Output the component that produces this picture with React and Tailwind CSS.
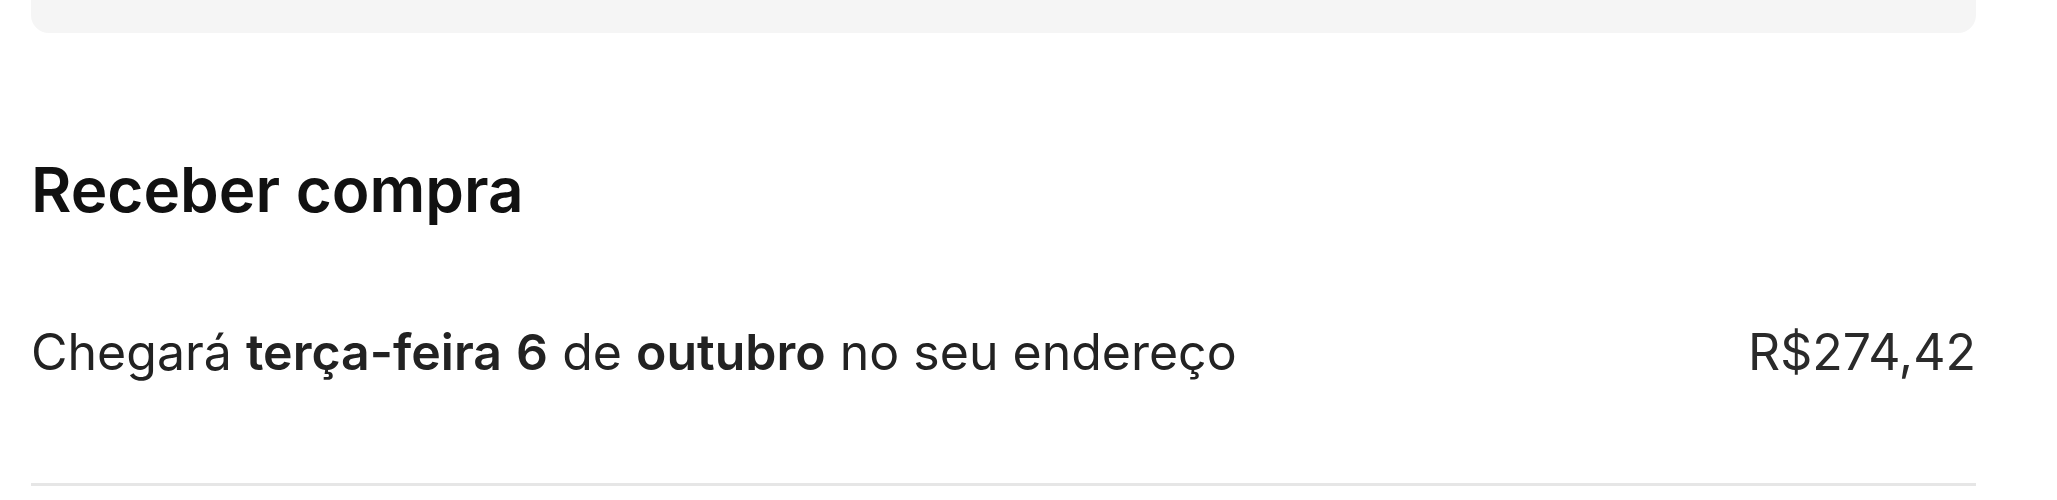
import React from "react";

const deliveryText = [
  { text: "Chegará ", bold: false },
  { text: "terça-feira", bold: true },
  { text: " ", bold: false },
  { text: "6", bold: true },
  { text: " de ", bold: false },
  { text: "outubro", bold: true },
  { text: " no seu endereço", bold: false },
];

export default function App() {
  return (
    <div className="w-full bg-white pl-[31px] pr-[81px] font-['Inter',sans-serif] text-[#1a1a1a]">
      <div className="h-[53px] -mt-[20px] rounded-b-[18px] bg-[#f5f5f5]" />

      <h2 className="mt-[121px] text-[62px] font-semibold leading-[72px] text-[#111]">
        Receber compra
      </h2>

      <div className="mt-[94px] flex items-center justify-between text-[50px] leading-[64px] text-[#222]">
        <p>
          {deliveryText.map((part, i) => (
            <span key={i} className={part.bold ? "font-semibold" : "font-normal"}>
              {part.text}
            </span>
          ))}
        </p>
        <span className="text-[#2a2a2a]">R$274,42</span>
      </div>

      <div className="mt-[99px] h-[3px] bg-[#e6e6e6]" />
    </div>
  );
}
